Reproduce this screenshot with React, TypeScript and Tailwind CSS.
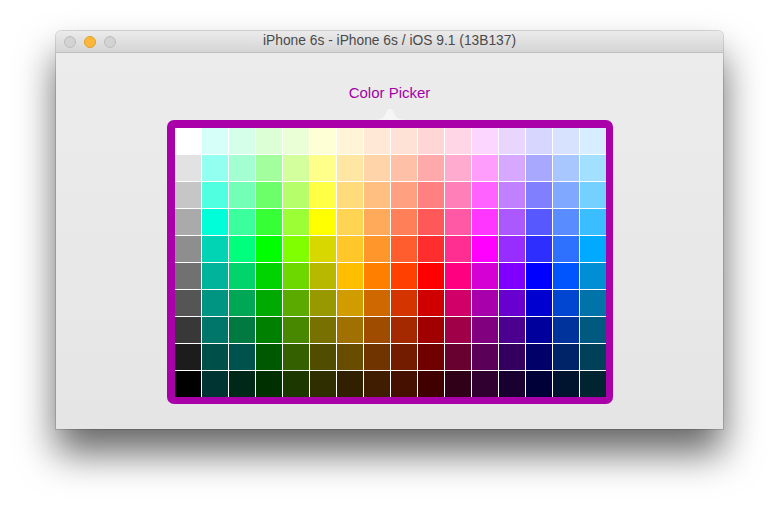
const PALETTE: string[][] = [
  ["#ffffff", "#d6fff9", "#d6ffe9", "#dcffd6", "#ebffd6", "#ffffd6", "#fff5d6", "#ffe9d6", "#ffe2d6", "#ffd6d6", "#ffd6e6", "#fdd6ff", "#e8d6ff", "#d6d6ff", "#d6e2ff", "#d6eeff"],
  ["#e2e2e2", "#92fff0", "#a3ffd1", "#a3ff9d", "#d4ff9d", "#ffff8a", "#ffe6a3", "#ffd4a8", "#ffc0a8", "#ffaaaa", "#ffaacf", "#ff9dfd", "#d6a8ff", "#a8a8ff", "#a8c6ff", "#a3dfff"],
  ["#c6c6c6", "#50ffe0", "#73ffb5", "#6dff6a", "#b6ff6a", "#ffff46", "#ffdb7c", "#ffbf80", "#ffa080", "#ff8080", "#ff80b8", "#ff62ff", "#c080ff", "#8080ff", "#80a8ff", "#73d0ff"],
  ["#aaaaaa", "#00ffd8", "#3aff9c", "#36ff36", "#9cff36", "#ffff00", "#ffd452", "#ffaa5a", "#ff8058", "#ff5858", "#ff58a5", "#ff36ff", "#ab58ff", "#5858ff", "#588cff", "#3abeff"],
  ["#8e8e8e", "#00d4b4", "#00ff7c", "#00ff00", "#80ff00", "#d8d800", "#ffc72a", "#ff962c", "#ff5d2e", "#ff2e2e", "#ff2e90", "#ff00ff", "#972eff", "#2e2eff", "#2e70ff", "#00aaff"],
  ["#717171", "#00b39a", "#00d46a", "#00d400", "#6cd800", "#b8b800", "#ffbf00", "#ff8000", "#ff4000", "#ff0000", "#ff0080", "#d400d4", "#8000ff", "#0000ff", "#0055ff", "#008fd4"],
  ["#555555", "#009482", "#00a855", "#00aa00", "#5aaa00", "#989800", "#d09c00", "#d06800", "#d43400", "#d00000", "#d00068", "#a800aa", "#6800d0", "#0000d0", "#0046d0", "#0073a8"],
  ["#383838", "#00766a", "#007a40", "#008000", "#488800", "#787000", "#a07000", "#a04c00", "#a42800", "#a00000", "#a00048", "#800080", "#4c0090", "#00009c", "#00349c", "#005a80"],
  ["#1c1c1c", "#00504a", "#00524c", "#005800", "#346000", "#504c00", "#684c00", "#703400", "#741c00", "#700000", "#680030", "#5a0058", "#340060", "#000068", "#002468", "#004058"],
  ["#000000", "#003432", "#002818", "#003000", "#1c3800", "#2e2e00", "#302000", "#401c00", "#461000", "#400000", "#300018", "#300030", "#180030", "#000038", "#001430", "#002430"],
];

function TrafficLights() {
  return (
    <div className="flex items-center gap-[8px] pl-[8px]">
      <span className="w-[12px] h-[12px] rounded-full bg-[#d3d3d3] border border-[#bdbdbd]" />
      <span className="w-[12px] h-[12px] rounded-full bg-[#fdb83a] border border-[#e0a02c]" />
      <span className="w-[12px] h-[12px] rounded-full bg-[#d3d3d3] border border-[#bdbdbd]" />
    </div>
  );
}

function ColorGrid() {
  return (
    <div className="grid grid-cols-[repeat(16,26px)] grid-rows-[repeat(10,26px)] gap-px bg-white">
      {PALETTE.flatMap((row, r) =>
        row.map((c, i) => (
          <div key={`${r}-${i}`} style={{ backgroundColor: c }} />
        ))
      )}
    </div>
  );
}

export default function App() {
  return (
    <div className="w-[779px] h-[509px] bg-white pt-[31px] pl-[56px] overflow-hidden">
      <div className="w-[667px] h-[398px] flex flex-col rounded-t-[5px] shadow-[0_0_0_1px_rgba(0,0,0,0.14),0_24px_38px_rgba(0,0,0,0.6)] bg-[#ececec]">
        <div
          className="relative h-[22px] flex items-center rounded-t-[5px] bg-gradient-to-b from-[#ebebeb] to-[#d5d5d5] border-b border-[#bfbfbf]"
          style={{ fontFamily: '"Liberation Sans", Arial, sans-serif' }}
        >
          <TrafficLights />
          <div className="absolute inset-0 flex items-center justify-center text-[13.8px] text-[#4a4a4a]">
            iPhone 6s - iPhone 6s / iOS 9.1 (13B137)
          </div>
        </div>
        <div className="flex-1 flex flex-col items-center bg-gradient-to-b from-[#ececec] to-[#e5e5e5]">
          <div
            className="mt-[31px] text-[15px] leading-[18px] text-[#a400a8]"
            style={{ fontFamily: '"Liberation Sans", Arial, sans-serif' }}
          >
            Color Picker
          </div>
          <svg width="34" height="13" viewBox="0 0 34 13" className="mt-[5px] block">
            <path d="M0 13 C8 13 11 11 14 4 C15.5 1 18.5 1 20 4 C23 11 26 13 34 13 Z" fill="#f6f6f6" />
          </svg>
          <div className="ml-px border-l-8 border-t-8 border-r-[7px] border-b-[7px] border-[#aa00aa] rounded-[7px]">
            <ColorGrid />
          </div>
        </div>
      </div>
    </div>
  );
}
